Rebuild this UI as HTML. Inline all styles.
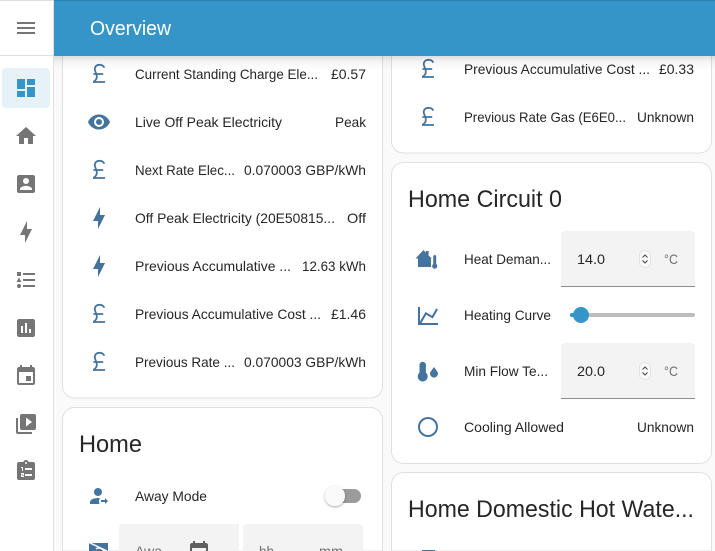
<!DOCTYPE html>
<html lang="en">
<head>
<meta charset="utf-8">
<title>Overview</title>
<style>
html,body{margin:0;padding:0;width:715px;height:551px;overflow:hidden;background:#fafafa}
svg{display:block}
text{font-family:"Liberation Sans",sans-serif;font-size:14px;fill:#262626}
.s path,.s use{fill:#757575}
.i{fill:#44739e}
</style>
</head>
<body>
<svg width="715" height="551" viewBox="0 0 715 551" xmlns="http://www.w3.org/2000/svg">
<defs>
<linearGradient id="hg" x1="0" y1="0" x2="0" y2="1"><stop offset="0" stop-color="#000" stop-opacity=".13"/><stop offset=".4" stop-color="#000" stop-opacity=".04"/><stop offset="1" stop-color="#000" stop-opacity="0"/></linearGradient>
<filter id="ts" x="-50%" y="-50%" width="200%" height="200%"><feDropShadow dx="0" dy="1" stdDeviation="1.2" flood-color="#000" flood-opacity=".35"/></filter>
<g id="gbp"><path fill="none" stroke="#44739e" stroke-width="1.8" d="M5.4 -6.4C4.4 -8.4 2.6 -9.2 0.6 -9.2C-2.6 -9.2 -4.4 -7.2 -4.2 -4.5C-4.1 -2.6 -2.6 -0.8 -2.2 2C-1.9 4.6 -3.4 6.6 -5.6 7.8M-5.6 0H4.2M-6 8H6"/></g>
<path id="bolt" d="M11 15H6L13 1V9H18L11 23V15Z"/>
<path id="cal" d="M19,19H5V8H19M16,1V3H8V1H6V3H5C3.89,3 3,3.89 3,5V19A2,2 0 0,0 5,21H19A2,2 0 0,0 21,19V5C21,3.89 20.1,3 19,3H18V1M17,12H12V17H17V12Z"/>
<g id="spin"><rect x="-5.5" y="-8" width="11" height="16" rx="4" fill="#fafafa" stroke="#e2e2e2"/><path d="M-2.5 -1.5L0 -4L2.5 -1.5M-2.5 1.5L0 4L2.5 1.5" fill="none" stroke="#444" stroke-width="1"/></g>
</defs>

<rect width="715" height="551" fill="#fafafa"/>

<!-- cards -->
<rect x="62.5" y="20" width="320" height="378" rx="12" fill="#fff" stroke="#e0e0e0"/>
<path d="M62.5 551V419.5a12 12 0 0 1 12-12H370.5a12 12 0 0 1 12 12V551Z" fill="#fff" stroke="#e0e0e0"/>
<rect x="391.5" y="20" width="320" height="133" rx="12" fill="#fff" stroke="#e0e0e0"/>
<rect x="391.5" y="162.5" width="320" height="301" rx="12" fill="#fff" stroke="#e0e0e0"/>
<path d="M391.5 551V484.5a12 12 0 0 1 12-12H699.5a12 12 0 0 1 12 12V551Z" fill="#fff" stroke="#e0e0e0"/>

<!-- left card icons -->
<use href="#gbp" x="99" y="74"/>
<path class="i" transform="translate(87 110)" d="M12,9A3,3 0 0,0 9,12A3,3 0 0,0 12,15A3,3 0 0,0 15,12A3,3 0 0,0 12,9M12,17A5,5 0 0,1 7,12A5,5 0 0,1 12,7A5,5 0 0,1 17,12A5,5 0 0,1 12,17M12,4.5C7,4.5 2.73,7.61 1,12C2.73,16.39 7,19.5 12,19.5C17,19.5 21.27,16.39 23,12C21.27,7.61 17,4.5 12,4.5Z"/>
<use href="#gbp" x="99" y="170"/>
<use href="#bolt" class="i" x="87" y="206"/>
<use href="#bolt" class="i" x="87" y="254"/>
<use href="#gbp" x="99" y="314"/>
<use href="#gbp" x="99" y="362"/>
<path class="i" transform="translate(87 484)" d="M18 16H14V18H18V20L21 17L18 14V16M11 4C8.8 4 7 5.8 7 8S8.8 12 11 12 15 10.2 15 8 13.2 4 11 4M11 14C6.6 14 3 15.8 3 18V20H12.5C12.2 19.2 12 18.4 12 17.5C12 16.3 12.3 15.2 12.9 14.1C12.3 14.1 11.7 14 11 14Z"/>
<rect class="i" x="89" y="543" width="19" height="8"/>
<path d="M88 542L107 551M96 549C98 547 102 548 104 551" fill="none" stroke="#fff" stroke-width="1.5"/>

<!-- right card icons -->
<use href="#gbp" x="428" y="69"/>
<use href="#gbp" x="428" y="117"/>
<path class="i" d="M418 267V258.5H415.5L423.5 250L426 252.6V251H428.6V255.5L431.8 258.5H431V267Z"/>
<path class="i" stroke="#fff" stroke-width=".8" d="M432.8 256.5A1.9 1.9 0 0 1 436.6 256.5V263.8A3 3 0 1 1 432.8 263.8Z"/>
<path class="i" transform="translate(416 304)" d="M16,11.78L20.24,4.45L21.97,5.45L16.74,14.5L10.23,10.75L5.46,19H22V21H2V3H4V17.54L9.5,8L16,11.78Z"/>
<path class="i" d="M419.5 365A3.2 3.2 0 0 1 425.9 365V372.6A5 5 0 1 1 419.5 372.6Z"/>
<path class="i" d="M434 367C436.2 370 438 372 438 373.6A4 4 0 0 1 430 373.6C430 372 431.8 370 434 367Z"/>
<path class="i" transform="translate(416 415)" d="M12,20A8,8 0 0,1 4,12A8,8 0 0,1 12,4A8,8 0 0,1 20,12A8,8 0 0,1 12,20M12,2A10,10 0 0,0 2,12A10,10 0 0,0 12,22A10,10 0 0,0 22,12A10,10 0 0,0 12,2Z"/>

<!-- left card text -->
<text x="135" y="79" textLength="183" lengthAdjust="spacingAndGlyphs">Current Standing Charge Ele...</text>
<text x="331" y="79" textLength="35" lengthAdjust="spacingAndGlyphs">£0.57</text>
<text x="135" y="127" textLength="147" lengthAdjust="spacingAndGlyphs">Live Off Peak Electricity</text>
<text x="335" y="127" textLength="31" lengthAdjust="spacingAndGlyphs">Peak</text>
<text x="135" y="175" textLength="100" lengthAdjust="spacingAndGlyphs">Next Rate Elec...</text>
<text x="244" y="175" textLength="122" lengthAdjust="spacingAndGlyphs">0.070003 GBP/kWh</text>
<text x="135" y="223" textLength="200" lengthAdjust="spacingAndGlyphs">Off Peak Electricity (20E50815...</text>
<text x="347" y="223" textLength="19" lengthAdjust="spacingAndGlyphs">Off</text>
<text x="135" y="271" textLength="156" lengthAdjust="spacingAndGlyphs">Previous Accumulative ...</text>
<text x="302" y="271" textLength="64" lengthAdjust="spacingAndGlyphs">12.63 kWh</text>
<text x="135" y="319" textLength="186" lengthAdjust="spacingAndGlyphs">Previous Accumulative Cost ...</text>
<text x="331" y="319" textLength="35" lengthAdjust="spacingAndGlyphs">£1.46</text>
<text x="135" y="367" textLength="100" lengthAdjust="spacingAndGlyphs">Previous Rate ...</text>
<text x="244" y="367" textLength="122" lengthAdjust="spacingAndGlyphs">0.070003 GBP/kWh</text>

<!-- Home card -->
<text x="79" y="452" style="font-size:24px" textLength="63" lengthAdjust="spacingAndGlyphs">Home</text>
<text x="135" y="501" textLength="72" lengthAdjust="spacingAndGlyphs">Away Mode</text>
<rect x="327" y="489" width="34" height="14" rx="7" fill="#9b9b9b"/>
<circle cx="335" cy="496" r="10" fill="#fafafa" filter="url(#ts)"/>
<path d="M119 551V528a4 4 0 0 1 4-4H239V551Z" fill="#f3f3f3"/>
<path d="M243 551V528a4 4 0 0 1 4-4H359a4 4 0 0 1 4 4V551Z" fill="#f3f3f3"/>
<text x="135" y="556" style="fill:#6f6f6f" textLength="27" lengthAdjust="spacingAndGlyphs">Awa</text>
<path fill="#5f5f5f" transform="translate(187 540)" d="M19,19H5V8H19M16,1V3H8V1H6V3H5C3.89,3 3,3.89 3,5V19A2,2 0 0,0 5,21H19A2,2 0 0,0 21,19V5C21,3.89 20.1,3 19,3H18V1Z"/>
<text x="259" y="556" style="fill:#6f6f6f" textLength="15" lengthAdjust="spacingAndGlyphs">hh</text>
<text x="319" y="556" style="fill:#6f6f6f" textLength="24" lengthAdjust="spacingAndGlyphs">mm</text>

<!-- right card text -->
<text x="464" y="74" textLength="186" lengthAdjust="spacingAndGlyphs">Previous Accumulative Cost ...</text>
<text x="659" y="74" textLength="35" lengthAdjust="spacingAndGlyphs">£0.33</text>
<text x="464" y="122" textLength="162" lengthAdjust="spacingAndGlyphs">Previous Rate Gas (E6E0...</text>
<text x="637" y="122" textLength="57" lengthAdjust="spacingAndGlyphs">Unknown</text>

<!-- Home Circuit -->
<text x="408" y="207" style="font-size:24px" textLength="154" lengthAdjust="spacingAndGlyphs">Home Circuit 0</text>
<text x="464" y="264" textLength="87" lengthAdjust="spacingAndGlyphs">Heat Deman...</text>
<path d="M561 287V235a4 4 0 0 1 4-4H691a4 4 0 0 1 4 4V287Z" fill="#f3f3f3"/>
<rect x="561" y="286" width="134" height="1" fill="#8f8f8f"/>
<text x="577" y="264" textLength="28" lengthAdjust="spacingAndGlyphs">14.0</text>
<use href="#spin" x="645" y="259"/>
<text x="664" y="264" style="fill:#6f6f6f" textLength="14" lengthAdjust="spacingAndGlyphs">°C</text>

<text x="464" y="320" textLength="87" lengthAdjust="spacingAndGlyphs">Heating Curve</text>
<rect x="570" y="313" width="125" height="4" rx="2" fill="#bdbdbd"/>
<rect x="570" y="313" width="11" height="4" rx="2" fill="#3595c8"/>
<circle cx="581" cy="315" r="8" fill="#3595c8"/>

<text x="464" y="376" textLength="84" lengthAdjust="spacingAndGlyphs">Min Flow Te...</text>
<path d="M561 399V347a4 4 0 0 1 4-4H691a4 4 0 0 1 4 4V399Z" fill="#f3f3f3"/>
<rect x="561" y="398" width="134" height="1" fill="#8f8f8f"/>
<text x="577" y="376" textLength="28" lengthAdjust="spacingAndGlyphs">20.0</text>
<use href="#spin" x="645" y="371"/>
<text x="664" y="376" style="fill:#6f6f6f" textLength="14" lengthAdjust="spacingAndGlyphs">°C</text>

<text x="464" y="432" textLength="100" lengthAdjust="spacingAndGlyphs">Cooling Allowed</text>
<text x="637" y="432" textLength="57" lengthAdjust="spacingAndGlyphs">Unknown</text>

<!-- DHW card -->
<text x="408" y="517" style="font-size:24px" textLength="286" lengthAdjust="spacingAndGlyphs">Home Domestic Hot Wate...</text>
<rect class="i" x="422" y="550" width="13" height="1"/>

<!-- header -->
<rect x="54" y="56" width="661" height="14" fill="url(#hg)"/>
<rect x="54" y="0" width="661" height="56" fill="#3595c8"/>
<rect x="54" y="0" width="661" height="1" fill="#2a80ad"/>
<text x="90" y="35" style="font-size:20px;fill:#fff" textLength="81" lengthAdjust="spacingAndGlyphs">Overview</text>

<!-- sidebar -->
<rect x="0" y="0" width="53" height="551" fill="#fff"/>
<rect x="53" y="0" width="1" height="551" fill="#e0e0e0"/>
<rect x="0" y="55" width="53" height="1" fill="#e0e0e0"/>
<rect x="0" y="0" width="53" height="1" fill="#e0e0e0"/>
<rect x="2" y="68" width="48" height="40" rx="4" fill="#e6f1f8"/>
<g class="s">
<path transform="translate(14 16)" d="M3,6H21V8H3V6M3,11H21V13H3V11M3,16H21V18H3V16Z"/>
<path transform="translate(14 76)" style="fill:#3595c8" d="M13,3V9H21V3M13,21H21V11H13M3,21H11V15H3M3,13H11V3H3V13Z"/>
<path transform="translate(14 124)" d="M10,20V14H14V20H19V12H22L12,3L2,12H5V20H10Z"/>
<path transform="translate(14 172)" d="M6,17C6,15 10,13.9 12,13.9C14,13.9 18,15 18,17V18H6M15,9A3,3 0 0,1 12,12A3,3 0 0,1 9,9A3,3 0 0,1 12,6A3,3 0 0,1 15,9M3,5V19A2,2 0 0,0 5,21H19A2,2 0 0,0 21,19V5A2,2 0 0,0 19,3H5C3.89,3 3,3.9 3,5Z"/>
<use href="#bolt" x="14" y="220"/>
<path transform="translate(14 268)" d="M5,9.5L7.5,14H2.5L5,9.5M3,4H7V8H3V4M5,20A2,2 0 0,0 7,18A2,2 0 0,0 5,16A2,2 0 0,0 3,18A2,2 0 0,0 5,20M9,5V7H21V5H9M9,19H21V17H9V19M9,13H21V11H9V13Z"/>
<path transform="translate(14 316)" d="M19 3H5C3.9 3 3 3.9 3 5V19C3 20.1 3.9 21 5 21H19C20.1 21 21 20.1 21 19V5C21 3.9 20.1 3 19 3M9 17H7V10H9V17M13 17H11V7H13V17M17 17H15V13H17V17Z"/>
<use href="#cal" x="14" y="364"/>
<path transform="translate(14 412)" d="M4,6H2V20A2,2 0 0,0 4,22H18V20H4V6M20,2H8A2,2 0 0,0 6,4V16A2,2 0 0,0 8,18H20A2,2 0 0,0 22,16V4A2,2 0 0,0 20,2M12,14.5V5.5L18,10L12,14.5Z"/>
<path transform="translate(14 459)" fill-rule="evenodd" d="M19,3H14.82C14.4,1.84 13.3,1 12,1C10.7,1 9.6,1.84 9.18,3H5A2,2 0 0,0 3,5V19A2,2 0 0,0 5,21H19A2,2 0 0,0 21,19V5A2,2 0 0,0 19,3M12,3A1,1 0 0,1 13,4A1,1 0 0,1 12,5A1,1 0 0,1 11,4A1,1 0 0,1 12,3ZM7,8V9H8V12H9V8ZM11,9V11H18V9ZM7,14V15H9V15.5H7V18H10V17H8V16.5H10V14ZM11,15V17H18V15Z"/>
</g>
</svg>
</body>
</html>
